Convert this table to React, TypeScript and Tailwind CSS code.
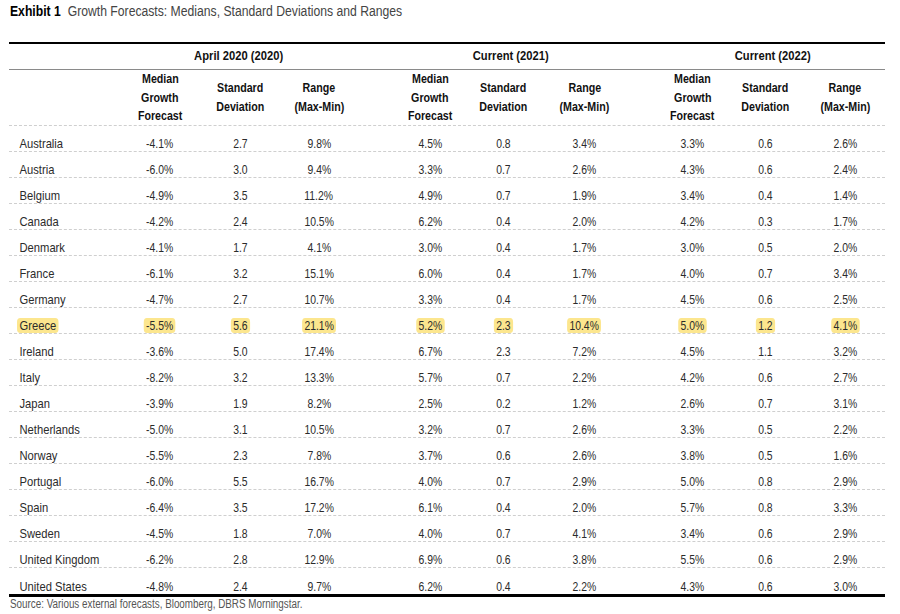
import React from 'react';

const COLS =
  'grid grid-cols-[111px_80px_80px_78px_39px_66px_81px_81px_35px_65px_80px_80px]';

type Row = { name: string; v: string[]; hl?: boolean };

const ROWS: Row[] = [
  { name: 'Australia', v: ['-4.1%', '2.7', '9.8%', '4.5%', '0.8', '3.4%', '3.3%', '0.6', '2.6%'] },
  { name: 'Austria', v: ['-6.0%', '3.0', '9.4%', '3.3%', '0.7', '2.6%', '4.3%', '0.6', '2.4%'] },
  { name: 'Belgium', v: ['-4.9%', '3.5', '11.2%', '4.9%', '0.7', '1.9%', '3.4%', '0.4', '1.4%'] },
  { name: 'Canada', v: ['-4.2%', '2.4', '10.5%', '6.2%', '0.4', '2.0%', '4.2%', '0.3', '1.7%'] },
  { name: 'Denmark', v: ['-4.1%', '1.7', '4.1%', '3.0%', '0.4', '1.7%', '3.0%', '0.5', '2.0%'] },
  { name: 'France', v: ['-6.1%', '3.2', '15.1%', '6.0%', '0.4', '1.7%', '4.0%', '0.7', '3.4%'] },
  { name: 'Germany', v: ['-4.7%', '2.7', '10.7%', '3.3%', '0.4', '1.7%', '4.5%', '0.6', '2.5%'] },
  { name: 'Greece', v: ['-5.5%', '5.6', '21.1%', '5.2%', '2.3', '10.4%', '5.0%', '1.2', '4.1%'], hl: true },
  { name: 'Ireland', v: ['-3.6%', '5.0', '17.4%', '6.7%', '2.3', '7.2%', '4.5%', '1.1', '3.2%'] },
  { name: 'Italy', v: ['-8.2%', '3.2', '13.3%', '5.7%', '0.7', '2.2%', '4.2%', '0.6', '2.7%'] },
  { name: 'Japan', v: ['-3.9%', '1.9', '8.2%', '2.5%', '0.2', '1.2%', '2.6%', '0.7', '3.1%'] },
  { name: 'Netherlands', v: ['-5.0%', '3.1', '10.5%', '3.2%', '0.7', '2.6%', '3.3%', '0.5', '2.2%'] },
  { name: 'Norway', v: ['-5.5%', '2.3', '7.8%', '3.7%', '0.6', '2.6%', '3.8%', '0.5', '1.6%'] },
  { name: 'Portugal', v: ['-6.0%', '5.5', '16.7%', '4.0%', '0.7', '2.9%', '5.0%', '0.8', '2.9%'] },
  { name: 'Spain', v: ['-6.4%', '3.5', '17.2%', '6.1%', '0.4', '2.0%', '5.7%', '0.8', '3.3%'] },
  { name: 'Sweden', v: ['-4.5%', '1.8', '7.0%', '4.0%', '0.7', '4.1%', '3.4%', '0.6', '2.9%'] },
  { name: 'United Kingdom', v: ['-6.2%', '2.8', '12.9%', '6.9%', '0.6', '3.8%', '5.5%', '0.6', '2.9%'] },
  { name: 'United States', v: ['-4.8%', '2.4', '9.7%', '6.2%', '0.4', '2.2%', '4.3%', '0.6', '3.0%'] },
];

// Liberation Sans squeezed horizontally to stand in for a condensed face
function NameCell({ text, hl }: { text: string; hl?: boolean }) {
  return (
    <div className="flex items-end pl-[8px]">
      <span
        className={[
          'inline-block origin-left scale-x-[0.83] whitespace-nowrap rounded-[4px] px-[3px] leading-[15px]',
          hl ? 'bg-[#fce68e]' : '',
        ].join(' ')}
      >
        {text}
      </span>
    </div>
  );
}

function Cell({ text, hl }: { text: string; hl?: boolean }) {
  return (
    <div className="flex items-end justify-center">
      <span
        className={[
          'inline-block scale-x-[0.77] whitespace-nowrap rounded-[4px] px-[3px] leading-[15px]',
          hl ? 'bg-[#fce68e]' : '',
        ].join(' ')}
      >
        {text}
      </span>
    </div>
  );
}

function HeadCell({ lines }: { lines: string[] }) {
  return (
    <div className="flex flex-col items-center justify-center leading-[18.5px]">
      {lines.map(l => (
        <span key={l} className="inline-block scale-x-[0.82] whitespace-nowrap">
          {l}
        </span>
      ))}
    </div>
  );
}

function Group({ label }: { label: string }) {
  return (
    <div className="col-span-3 flex items-center justify-center">
      <span className="inline-block scale-x-[0.83] whitespace-nowrap">{label}</span>
    </div>
  );
}

export default function App() {
  return (
    <div
      className="h-[614px] w-[900px] overflow-hidden bg-white text-[#2b2b2b]"
      style={{ fontFamily: '"Liberation Sans", Arial, sans-serif' }}
    >
      {/* title */}
      <div className="pl-[10px] pt-[2px] text-[14px] leading-[18px] text-[#444]">
        <span className="inline-block origin-left scale-x-[0.87] whitespace-nowrap">
          <span className="font-bold text-black">Exhibit 1</span>
          <span className="ml-[8px]">Growth Forecasts: Medians, Standard Deviations and Ranges</span>
        </span>
      </div>

      <div className="ml-[9px] mt-[22px] w-[876px] border-t-2 border-black">
        {/* group headers */}
        <div className={`${COLS} h-[26px] border-b border-[#8a8a8a] text-[13.5px] font-bold text-[#111]`}>
          <div />
          <Group label="April 2020 (2020)" />
          <div />
          <Group label="Current (2021)" />
          <div />
          <Group label="Current (2022)" />
        </div>

        {/* column headers */}
        <div className={`${COLS} h-[56px] border-b border-dashed border-[#cfcfcf] text-[13px] font-bold text-[#111]`}>
          <div />
          <HeadCell lines={['Median', 'Growth', 'Forecast']} />
          <HeadCell lines={['Standard', 'Deviation']} />
          <HeadCell lines={['Range', '(Max-Min)']} />
          <div />
          <HeadCell lines={['Median', 'Growth', 'Forecast']} />
          <HeadCell lines={['Standard', 'Deviation']} />
          <HeadCell lines={['Range', '(Max-Min)']} />
          <div />
          <HeadCell lines={['Median', 'Growth', 'Forecast']} />
          <HeadCell lines={['Standard', 'Deviation']} />
          <HeadCell lines={['Range', '(Max-Min)']} />
        </div>

        {/* rows */}
        {ROWS.map((r, i) => {
          const last = i === ROWS.length - 1;
          return (
            <div
              key={r.name}
              className={[
                COLS,
                'text-[13.5px]',
                last
                  ? 'h-[29px] border-b-[3px] border-black'
                  : 'h-[26px] border-b border-dashed border-[#cfcfcf]',
              ].join(' ')}
            >
              <NameCell text={r.name} hl={r.hl} />
              <Cell text={r.v[0]} hl={r.hl} />
              <Cell text={r.v[1]} hl={r.hl} />
              <Cell text={r.v[2]} hl={r.hl} />
              <div />
              <Cell text={r.v[3]} hl={r.hl} />
              <Cell text={r.v[4]} hl={r.hl} />
              <Cell text={r.v[5]} hl={r.hl} />
              <div />
              <Cell text={r.v[6]} hl={r.hl} />
              <Cell text={r.v[7]} hl={r.hl} />
              <Cell text={r.v[8]} hl={r.hl} />
            </div>
          );
        })}
      </div>

      <div className="pl-[10px] text-[12px] leading-[15px] text-[#555]">
        <span className="inline-block origin-left scale-x-[0.82] whitespace-nowrap">
          Source: Various external forecasts, Bloomberg, DBRS Morningstar.
        </span>
      </div>
    </div>
  );
}
